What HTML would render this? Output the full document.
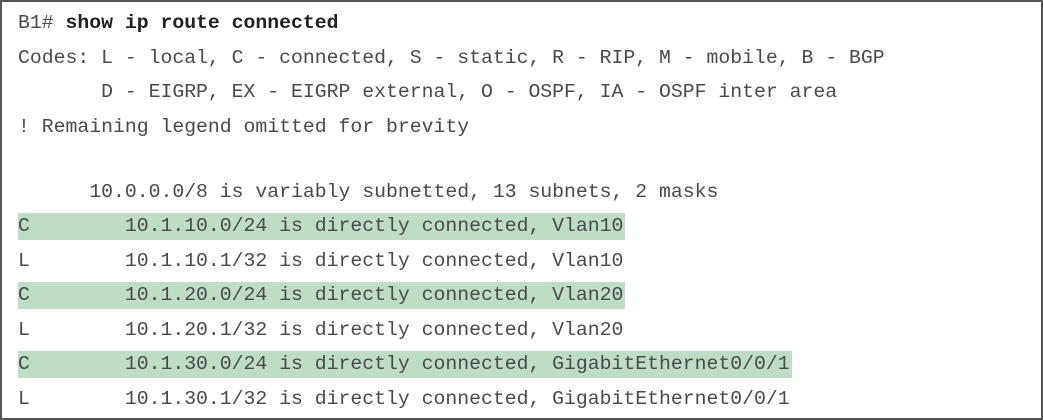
<!DOCTYPE html>
<html><head><style>
html,body{margin:0;padding:0;background:#fff;}
.box{position:absolute;left:0;top:0;width:1039px;height:416px;border:2px solid #555;}
.l{position:absolute;left:18px;height:27px;line-height:27px;white-space:pre;font-family:"Liberation Mono",monospace;font-size:19.8px;color:#4a4a4a;}
.h{background:#bfdcc7;padding-right:2px;}
b{color:#222;}
</style></head><body>
<div class="box"></div>
<div class="l" style="top:10px">B1# <b>show ip route connected</b></div>
<div class="l" style="top:45px">Codes: L - local, C - connected, S - static, R - RIP, M - mobile, B - BGP</div>
<div class="l" style="top:79px">       D - EIGRP, EX - EIGRP external, O - OSPF, IA - OSPF inter area</div>
<div class="l" style="top:114px">! Remaining legend omitted for brevity</div>
<div class="l" style="top:179px">      10.0.0.0/8 is variably subnetted, 13 subnets, 2 masks</div>
<div class="l h" style="top:213px">C        10.1.10.0/24 is directly connected, Vlan10</div>
<div class="l" style="top:248px">L        10.1.10.1/32 is directly connected, Vlan10</div>
<div class="l h" style="top:282px">C        10.1.20.0/24 is directly connected, Vlan20</div>
<div class="l" style="top:317px">L        10.1.20.1/32 is directly connected, Vlan20</div>
<div class="l h" style="top:351px">C        10.1.30.0/24 is directly connected, GigabitEthernet0/0/1</div>
<div class="l" style="top:386px">L        10.1.30.1/32 is directly connected, GigabitEthernet0/0/1</div>
</body></html>
